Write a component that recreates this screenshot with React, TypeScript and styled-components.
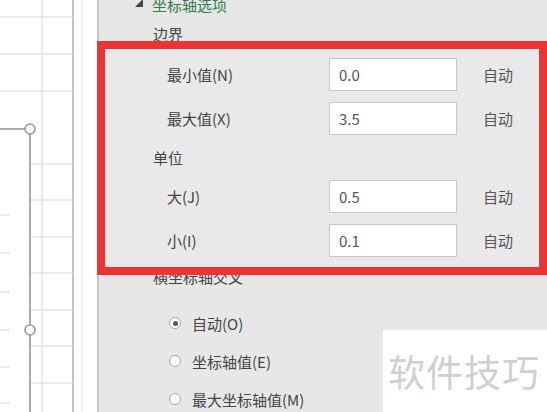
import styled, { createGlobalStyle } from 'styled-components';

const GlobalStyle = createGlobalStyle`
  html, body {
    margin: 0;
    padding: 0;
    background: #ffffff;
  }
  body {
    font-family: "Noto Sans CJK SC", "Noto Sans", sans-serif;
  }
`;

const GRID_ROWS = [17, 54, 91, 164, 200, 237, 273, 310, 346, 383];
const TICKS = [215, 253, 292, 330, 367, 403];

const bounds = [
  { label: '最小值(N)', value: '0.0' },
  { label: '最大值(X)', value: '3.5' },
];
const units = [
  { label: '大(J)', value: '0.5' },
  { label: '小(I)', value: '0.1' },
];
const crossOptions = [
  { label: '自动(O)', checked: true },
  { label: '坐标轴值(E)', checked: false },
  { label: '最大坐标轴值(M)', checked: false },
];

const ChartPreview = () => (
  <svg width="97" height="412" viewBox="0 0 97 412">
    <line x1="42" y1="0" x2="42" y2="412" stroke="#dcdcdc" strokeWidth="1.2" />
    <line x1="82" y1="0" x2="82" y2="412" stroke="#ececec" strokeWidth="1" />
    <line x1="73" y1="0" x2="73" y2="412" stroke="#b4b4b4" strokeWidth="1.6" />
    {GRID_ROWS.map((y) => (
      <line key={y} x1={y < 130 ? 0 : 30} y1={y} x2="73" y2={y} stroke="#dadada" strokeWidth="1.2" />
    ))}
    {TICKS.map((y) => (
      <line key={y} x1="0" y1={y} x2="10" y2={y} stroke="#e0e0e0" strokeWidth="1.2" />
    ))}
    <line x1="0" y1="129" x2="25" y2="129" stroke="#999" strokeWidth="1.6" />
    <line x1="30" y1="134" x2="30" y2="325" stroke="#999" strokeWidth="1.6" />
    <line x1="30" y1="335" x2="30" y2="412" stroke="#999" strokeWidth="1.6" />
    <circle cx="30" cy="129" r="5" fill="#fff" stroke="#999" strokeWidth="1.6" />
    <circle cx="30" cy="330" r="5" fill="#fff" stroke="#999" strokeWidth="1.6" />
  </svg>
);

const ExpandedArrow = () => (
  <svg width="8" height="8" viewBox="0 0 8 8">
    <polygon points="8,0 8,8 0,8" fill="#444" />
  </svg>
);

export default function App() {
  return (
    <>
      <GlobalStyle />
      <Screen>
        <ChartPane>
          <ChartPreview />
        </ChartPane>
        <Panel>
          <GroupHeader>
            <ExpandedArrow />
            <span>坐标轴选项</span>
          </GroupHeader>
          <SectionLabel>边界</SectionLabel>
          <Highlight>
            {bounds.map((row) => (
              <FieldRow key={row.label}>
                <FieldLabel>{row.label}</FieldLabel>
                <ValueBox>{row.value}</ValueBox>
                <AutoLink>自动</AutoLink>
              </FieldRow>
            ))}
            <SubHeading>单位</SubHeading>
            <UnitRows>
              {units.map((row) => (
                <FieldRow key={row.label}>
                  <FieldLabel>{row.label}</FieldLabel>
                  <ValueBox>{row.value}</ValueBox>
                  <AutoLink>自动</AutoLink>
                </FieldRow>
              ))}
            </UnitRows>
          </Highlight>
          <CrossLabel>横坐标轴交叉</CrossLabel>
          <RadioList>
            {crossOptions.map((opt) => (
              <RadioRow key={opt.label}>
                <RadioDot $checked={opt.checked} />
                <span>{opt.label}</span>
              </RadioRow>
            ))}
          </RadioList>
        </Panel>
        <Watermark>软件技巧</Watermark>
      </Screen>
    </>
  );
}

const Screen = styled.div`
  position: relative;
  display: flex;
  width: 547px;
  height: 412px;
  overflow: hidden;
  background: #fff;
`;

const ChartPane = styled.div`
  width: 97px;
  flex-shrink: 0;
  background: #fff;
  svg {
    display: block;
  }
`;

const Panel = styled.div`
  flex: 1;
  display: flex;
  flex-direction: column;
  background: #e7e7e7;
  border-left: 2px solid #c6c6c6;
  padding-left: 54px;
  color: #444;
  font-size: 15px;
  & > * {
    flex-shrink: 0;
  }
`;

const GroupHeader = styled.div`
  display: flex;
  align-items: center;
  gap: 9px;
  height: 20px;
  margin-top: -5px;
  margin-left: -18px;
  color: #2f7d4c;
  font-size: 15px;
  line-height: 20px;
  svg {
    margin-top: -5px;
  }
`;

const SectionLabel = styled.div`
  height: 16px;
  line-height: 16px;
  margin-top: 11px;
`;

const Highlight = styled.div`
  position: relative;
  z-index: 1;
  box-sizing: border-box;
  margin-top: -1px;
  margin-left: -56px;
  width: 450px;
  height: 234px;
  border: 8px solid #ee3333;
  background: #e9e9e9;
  padding: 9px 0 0 48px;
`;

const FieldRow = styled.div`
  display: flex;
  align-items: center;
  height: 33px;
  padding-left: 14px;
  & + & {
    margin-top: 11px;
  }
`;

const FieldLabel = styled.div`
  width: 162px;
`;

const ValueBox = styled.div`
  box-sizing: border-box;
  width: 128px;
  height: 33px;
  line-height: 31px;
  padding-left: 9px;
  background: #fff;
  border: 1px solid #c8c8c8;
  color: #555;
`;

const AutoLink = styled.div`
  margin-left: 26px;
  color: #555;
`;

const SubHeading = styled.div`
  height: 45px;
  line-height: 45px;
`;

const UnitRows = styled.div`
  & > div + div {
    margin-top: 12px;
  }
`;

const CrossLabel = styled.div`
  height: 20px;
  line-height: 20px;
  margin-top: -8px;
`;

const RadioList = styled.div`
  margin-top: 17px;
  padding-left: 16px;
`;

const RadioRow = styled.div`
  display: flex;
  align-items: center;
  gap: 11px;
  height: 38px;
`;

const RadioDot = styled.span<{ $checked: boolean }>`
  box-sizing: border-box;
  display: inline-flex;
  align-items: center;
  justify-content: center;
  width: 12px;
  height: 12px;
  border-radius: 50%;
  border: 1px solid #a5a5a5;
  background: #fff;
  &::after {
    content: '';
    width: 5px;
    height: 5px;
    border-radius: 50%;
    background: ${(p) => (p.$checked ? '#555' : 'transparent')};
  }
`;

const Watermark = styled.div`
  position: absolute;
  left: 383px;
  top: 330px;
  right: 0;
  bottom: 0;
  z-index: 2;
  display: flex;
  align-items: center;
  padding-left: 5px;
  background: #fff;
  color: #d0d0d0;
  font-size: 37px;
  letter-spacing: 1px;
`;
